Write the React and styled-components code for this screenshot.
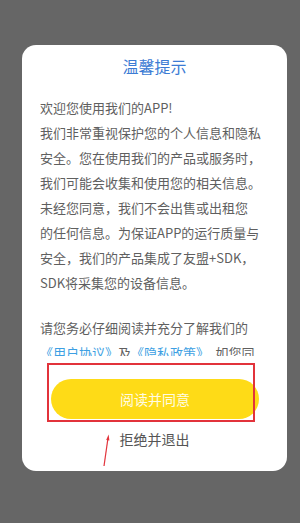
import React from 'react';
import styled, { createGlobalStyle } from 'styled-components';

const GlobalStyle = createGlobalStyle`
    html, body {
        margin: 0;
        padding: 0;
        background: #666666;
    }
    body {
        font-family: "Noto Sans CJK SC", "Noto Sans", sans-serif;
    }
`;

const Overlay = styled.div`
    width: 300px;
    height: 523px;
    background: #666666;
    padding: 45px 13px 0 22px;
    box-sizing: border-box;
`;

const Dialog = styled.div`
    position: relative;
    width: 265px;
    height: 426px;
    background: #ffffff;
    border-radius: 14px;
    display: flex;
    flex-direction: column;
`;

const Title = styled.h2`
    margin: 9px 0 17px;
    font-size: 16px;
    line-height: 24px;
    font-weight: 400;
    text-align: center;
    color: #3b7bd4;
`;

const Content = styled.div`
    flex: 1;
    overflow: hidden;
    padding: 0 18px;
    font-size: 13px;
    line-height: 25px;
    color: #5f5f5f;
    white-space: nowrap;
`;

const Paragraph = styled.p`
    margin: ${props => props.$gap ? '20px' : '0'} 0 0;
`;

const Link = styled.span`
    color: #3d9fe3;
`;

const Footer = styled.div`
    display: flex;
    flex-direction: column;
    align-items: center;
    padding: 23px 0 22px;
    gap: 10px;
`;

const AgreeButton = styled.button`
    width: 208px;
    height: 40px;
    border: 0;
    border-radius: 20px;
    background: #fedb17;
    color: #fffbe3;
    font-family: inherit;
    font-size: 14px;
    margin-left: 1px;
    cursor: pointer;
`;

const RejectButton = styled.button`
    border: 0;
    background: none;
    padding: 0;
    height: 20px;
    line-height: 20px;
    font-family: inherit;
    font-size: 14px;
    color: #555555;
    cursor: pointer;
`;

// annotation marks drawn over the screenshot
const Highlight = styled.div`
    position: absolute;
    left: 25px;
    top: 318px;
    width: 208px;
    height: 59px;
    box-sizing: border-box;
    border: 2px solid #e2333b;
    pointer-events: none;
`;

const Arrow = styled.svg`
    position: absolute;
    left: 74px;
    top: 388px;
    pointer-events: none;
`;

export default function App() {
    return (
        <>
            <GlobalStyle />
            <Overlay>
                <Dialog>
                    <Title>温馨提示</Title>
                    <Content>
                        <Paragraph>
                            欢迎您使用我们的APP!<br />
                            我们非常重视保护您的个人信息和隐私<br />
                            安全。您在使用我们的产品或服务时，<br />
                            我们可能会收集和使用您的相关信息。<br />
                            未经您同意，我们不会出售或出租您<br />
                            的任何信息。为保证APP的运行质量与<br />
                            安全，我们的产品集成了友盟+SDK，<br />
                            SDK将采集您的设备信息。
                        </Paragraph>
                        <Paragraph $gap>
                            请您务必仔细阅读并充分了解我们的<br />
                            <Link>《用户协议》</Link>及<Link>《隐私政策》</Link>，如您同<br />
                            意，请点击“阅读并同意”开始接受我<br />
                            们的服务。
                        </Paragraph>
                    </Content>
                    <Footer>
                        <AgreeButton>阅读并同意</AgreeButton>
                        <RejectButton>拒绝并退出</RejectButton>
                    </Footer>
                    <Highlight />
                    <Arrow width="16" height="34" viewBox="0 0 16 34">
                        <path d="M8 33 L12 5" stroke="#e2333b" strokeWidth="1.2" fill="none" />
                        <path d="M12.6 1.5 L13.4 7.5 L10.2 7 Z" fill="#e2333b" />
                    </Arrow>
                </Dialog>
            </Overlay>
        </>
    );
}
